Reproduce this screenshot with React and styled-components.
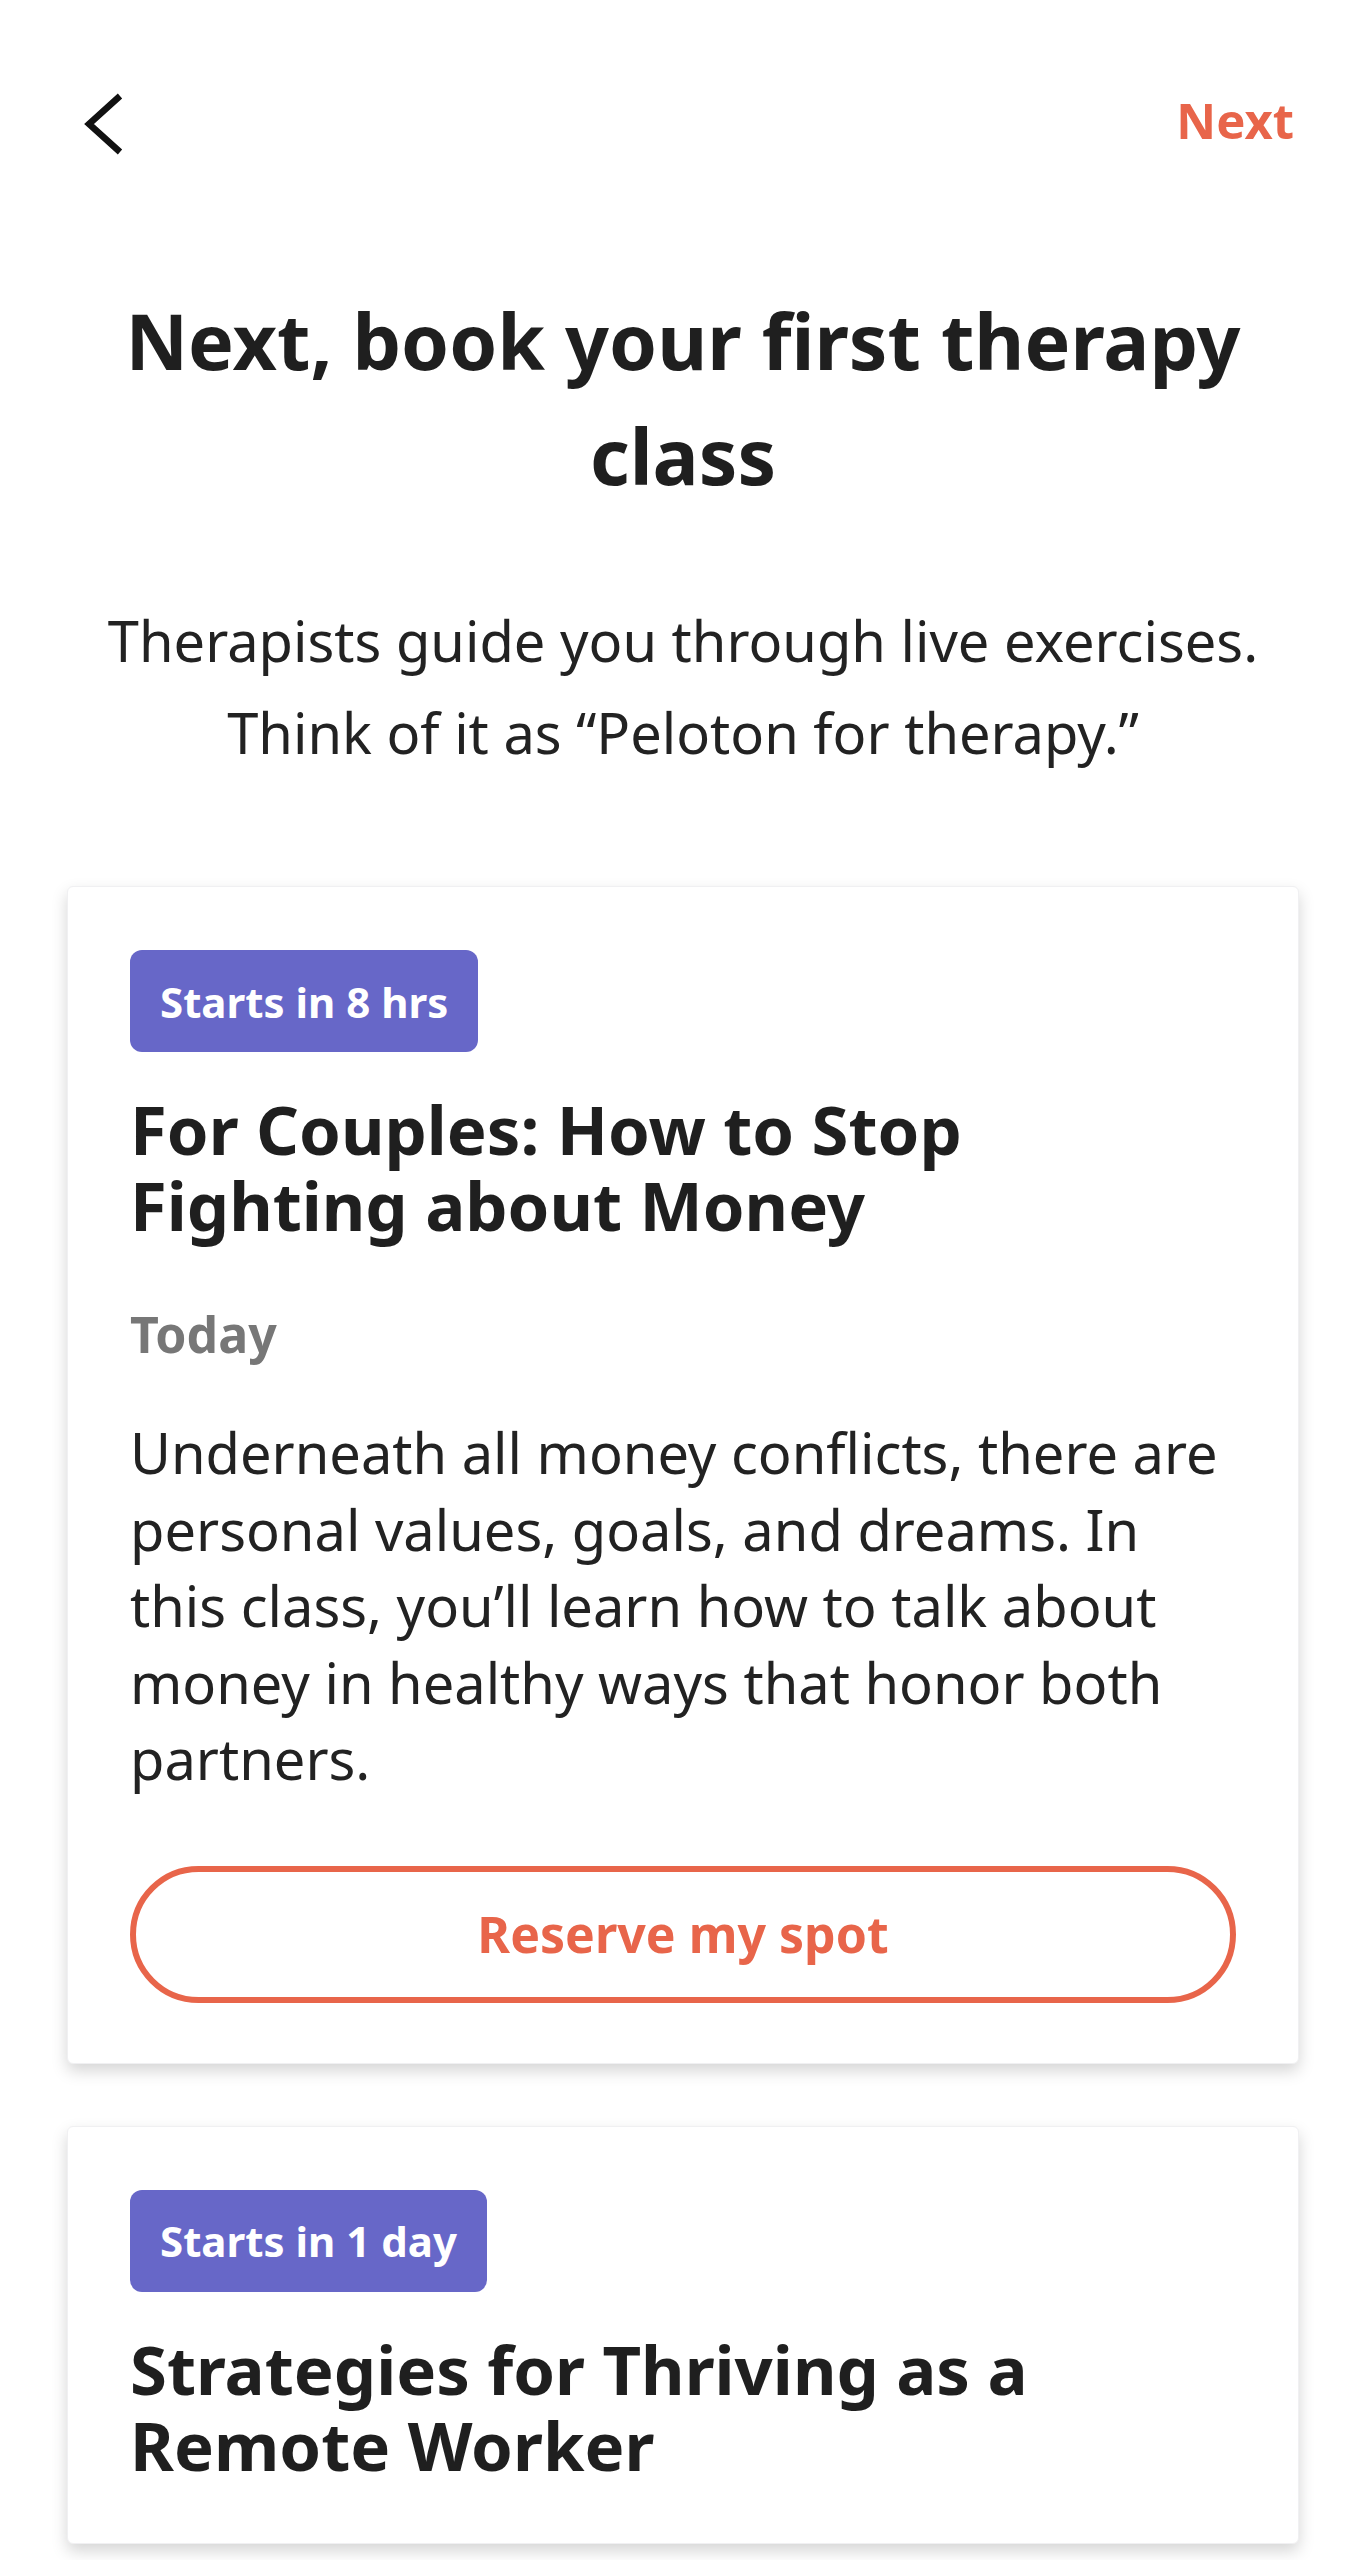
import React from "react";
import styled, { createGlobalStyle } from "styled-components";

const GlobalStyle = createGlobalStyle`
  * {
    box-sizing: border-box;
  }
  body {
    margin: 0;
    background-color: #ffffff;
    font-family: "Noto Sans", "Open Sans", sans-serif;
    color: #1f1f1f;
  }
`;

const Screen = styled.main`
  height: 100vh;
  overflow: hidden;
  background-color: #ffffff;
`;

const Header = styled.header`
  display: flex;
  justify-content: space-between;
  align-items: center;
  height: 64px;
  margin-top: 92px;
  padding: 0 72px 0 84px;
`;

const BackButton = styled.button`
  display: flex;
  align-items: center;
  padding: 0;
  border: none;
  background: none;
  cursor: pointer;
`;

const NextLink = styled.button`
  margin-bottom: 8px;
  padding: 0;
  border: none;
  background: none;
  font-family: "Noto Sans", sans-serif;
  font-size: 49px;
  font-weight: 700;
  color: #e8654a;
  cursor: pointer;
`;

const Intro = styled.section`
  display: flex;
  flex-direction: column;
  align-items: center;
  padding: 0 50px;
  text-align: center;
`;

const Heading = styled.h1`
  margin: 127px 0 0;
  font-size: 77px;
  line-height: 115px;
  font-weight: 700;
  color: #1f1f1f;
`;

const Lead = styled.p`
  margin: 81px 0 0;
  font-size: 56px;
  line-height: 92px;
  font-weight: 400;
  color: #222222;
`;

const ClassList = styled.section`
  display: flex;
  flex-direction: column;
  gap: 62px;
  margin-top: 108px;
  padding: 0 67px;
`;

const Card = styled.article`
  display: flex;
  flex-direction: column;
  align-items: flex-start;
  padding: 63px 62px 60px;
  background-color: #ffffff;
  border: 1px solid #f0f0f2;
  border-radius: 6px;
  box-shadow: 0 7px 16px rgba(0, 0, 0, 0.17);
`;

const Badge = styled.span`
  display: inline-flex;
  align-items: center;
  height: 102px;
  padding: 0 30px;
  border-radius: 12px;
  background-color: #6767c8;
  color: #ffffff;
  font-size: 42px;
  font-weight: 700;
`;

const ClassTitle = styled.h2`
  max-width: 1050px;
  margin: 39px 0 0;
  font-size: 67px;
  line-height: 76px;
  font-weight: 700;
  color: #1f1f1f;
`;

const When = styled.p`
  margin: 59px 0 0;
  font-size: 50px;
  line-height: 64px;
  font-weight: 700;
  color: #777777;
`;

const Summary = styled.p`
  margin: 48px 0 0;
  font-size: 56px;
  line-height: 76.5px;
  color: #222222;
`;

const ReserveButton = styled.button`
  width: 100%;
  height: 137px;
  margin-top: 69px;
  border: 6px solid #e8654a;
  border-radius: 70px;
  background-color: #ffffff;
  font-family: "Noto Sans", sans-serif;
  font-size: 50px;
  font-weight: 700;
  color: #e8654a;
  cursor: pointer;
`;

const ChevronLeft = () => (
  <svg width="42" height="64" viewBox="0 0 42 64" fill="none">
    <polyline
      points="36,4 5,32 36,60"
      stroke="#111111"
      strokeWidth="6.5"
      strokeLinecap="butt"
      strokeLinejoin="miter"
    />
  </svg>
);

const classes = [
  {
    badge: "Starts in 8 hrs",
    title: "For Couples: How to Stop Fighting about Money",
    when: "Today",
    summary:
      "Underneath all money conflicts, there are personal values, goals, and dreams. In this class, you’ll learn how to talk about money in healthy ways that honor both partners.",
    action: "Reserve my spot",
  },
  {
    badge: "Starts in 1 day",
    title: "Strategies for Thriving as a Remote Worker",
  },
];

const App = () => {
  return (
    <>
      <GlobalStyle />
      <Screen>
        <Header>
          <BackButton aria-label="Back">
            <ChevronLeft />
          </BackButton>
          <NextLink>Next</NextLink>
        </Header>

        <Intro>
          <Heading>Next, book your first therapy class</Heading>
          <Lead>
            Therapists guide you through live exercises. Think of it as
            “Peloton for therapy.”
          </Lead>
        </Intro>

        <ClassList>
          {classes.map((item) => (
            <Card key={item.title}>
              <Badge>{item.badge}</Badge>
              <ClassTitle>{item.title}</ClassTitle>
              {item.when && <When>{item.when}</When>}
              {item.summary && <Summary>{item.summary}</Summary>}
              {item.action && <ReserveButton>{item.action}</ReserveButton>}
            </Card>
          ))}
        </ClassList>
      </Screen>
    </>
  );
};

export default App;
